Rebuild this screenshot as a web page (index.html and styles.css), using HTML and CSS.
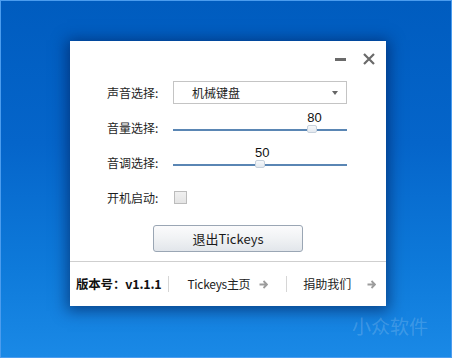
FILE: index.html
```html
<!DOCTYPE html>
<html>
<head>
<meta charset="utf-8">
<link rel="stylesheet" href="styles.css">
</head>
<body>
<div class="desktop">
  <div class="window">
    <div class="titlebar">
      <span class="btn-min"></span>
      <svg class="btn-close" width="12" height="12" viewBox="0 0 12 12"><path d="M1 1 L11 11 M11 1 L1 11" stroke="#6a6a6a" stroke-width="2.2" fill="none"/></svg>
    </div>
    <div class="form">
      <div class="row">
        <span class="label">声音选择:</span>
        <div class="select"><span class="select-text">机械键盘</span><span class="caret"></span></div>
      </div>
      <div class="row">
        <span class="label">音量选择:</span>
        <div class="slider"><span class="value" style="left:80%">80</span><span class="thumb" style="left:80%"></span></div>
      </div>
      <div class="row">
        <span class="label">音调选择:</span>
        <div class="slider"><span class="value" style="left:50%">50</span><span class="thumb" style="left:50%"></span></div>
      </div>
      <div class="row">
        <span class="label">开机启动:</span>
        <span class="checkbox"></span>
      </div>
    </div>
    <div class="actions"><button class="quit">退出Tickeys</button></div>
    <div class="footer">
      <span class="version">版本号：v1.1.1</span>
      <span class="sep sep1"></span>
      <span class="link link1">Tickeys主页</span>
      <svg class="arrow arrow1" width="9" height="9" viewBox="0 0 9 9"><path d="M0.5 4.5 H8 M4.5 1 L8 4.5 L4.5 8" stroke="#9c9c9c" stroke-width="1.8" fill="none"/></svg>
      <span class="sep sep2"></span>
      <span class="link link2">捐助我们</span>
      <svg class="arrow arrow2" width="9" height="9" viewBox="0 0 9 9"><path d="M0.5 4.5 H8 M4.5 1 L8 4.5 L4.5 8" stroke="#9c9c9c" stroke-width="1.8" fill="none"/></svg>
    </div>
  </div>
  <div class="watermark">小众软件</div>
</div>
</body>
</html>
```
FILE: styles.css
```css
html, body { margin: 0; padding: 0; }
body { font-family: "Noto Sans CJK SC", "Noto Sans", sans-serif; color: #222; }
.desktop {
  position: relative;
  width: 452px; height: 358px; box-sizing: border-box;
  border: 1px solid #4b9cee;
  background: linear-gradient(180deg, #005cbf 0%, #0565ca 40%, #0e7ada 75%, #1a89e6 100%);
  padding: 40px 0 0 69px;
}
.window {
  width: 316px; height: 265px; background: #fff;
  box-shadow: 0 2px 14px 3px rgba(0, 20, 70, 0.55);
  display: flex; flex-direction: column;
}
.titlebar {
  height: 30px; box-sizing: border-box;
  display: flex; justify-content: flex-end; align-items: flex-start;
  padding: 12px 11px 0 0; gap: 17px;
}
.btn-min { width: 11px; height: 3px; background: #6a6a6a; margin-top: 5px; }
.btn-close { display: block; }
.form { padding: 4px 0 0 37px; }
.row { height: 35px; display: flex; align-items: center; }
.label { width: 66px; font-size: 12px; line-height: 14px; color: #1e1e1e; }
.select {
  width: 174px; height: 23px; box-sizing: border-box;
  border: 1px solid #c4c4c4; display: flex; align-items: center;
  padding: 0 8px 0 18px; justify-content: space-between;
}
.select-text { font-size: 12px; line-height: 14px; }
.caret { width: 0; height: 0; border-left: 3.5px solid transparent; border-right: 3.5px solid transparent; border-top: 4px solid #666; }
.slider { position: relative; width: 174px; height: 2px; background: #5a86b4; margin-top: 4px; }
.thumb {
  position: absolute; top: -4px; width: 10px; height: 8px; margin-left: -5px; box-sizing: border-box;
  border: 1px solid #c7d1dc; border-radius: 2px; background: linear-gradient(#f6f8fa, #e3e9ef);
}
.value { position: absolute; top: -18px; margin-left: -5px; font-family: "Liberation Sans", sans-serif; font-size: 13px; line-height: 13px; color: #111; }
.checkbox {
  width: 13px; height: 13px; box-sizing: border-box; margin-left: 1px;
  border: 1px solid #bcbcbc; background: linear-gradient(#f0f0f0, #e4e4e4);
}
.actions { margin-top: 10px; display: flex; padding-left: 83px; }
.quit {
  width: 150px; height: 27px; box-sizing: border-box; padding: 0;
  border: 1px solid #9aa6b4; border-radius: 3px;
  background: linear-gradient(#fbfbfc 0%, #f0f2f4 50%, #e2e6eb 100%);
  font-family: "Noto Sans CJK SC", sans-serif; font-size: 13px; color: #1a1a1a;
}
.footer {
  margin-top: 9px; border-top: 1px solid #cfcfcf; flex: 1;
  display: flex; align-items: center; padding-left: 6px;
  font-size: 12px; line-height: 14px;
}
.version { font-weight: bold; font-size: 12.5px; color: #111; letter-spacing: -0.2px; }
.sep { width: 1px; height: 16px; background: #d6d6d6; }
.sep1 { margin-left: 7px; }
.link1 { margin-left: 18px; letter-spacing: -0.3px; }
.arrow { display: block; }
.arrow1 { margin-left: 9px; }
.sep2 { margin-left: 18px; }
.link2 { margin-left: 16px; }
.arrow2 { margin-left: 16px; }
.watermark {
  position: absolute; left: 351px; top: 311px;
  font-size: 19px; color: rgba(255, 255, 255, 0.18); letter-spacing: 0;
}
```
